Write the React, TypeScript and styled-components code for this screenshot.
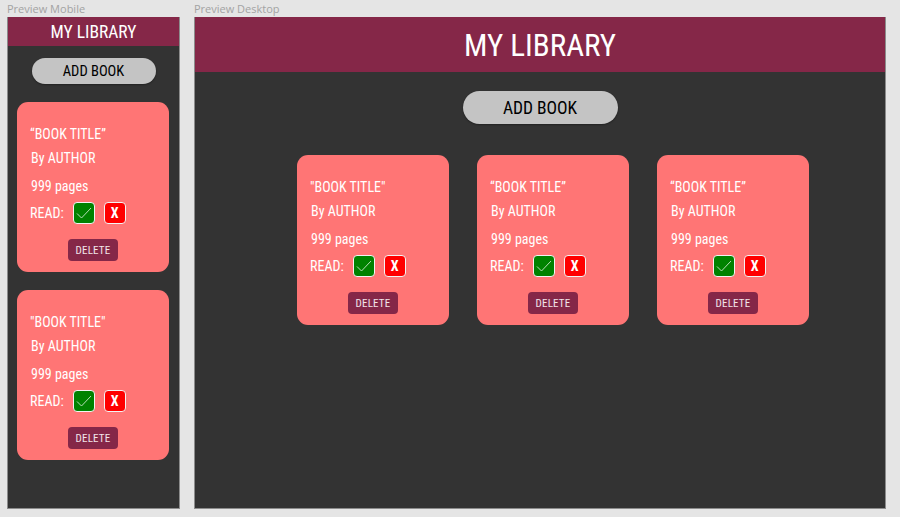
import styled, { createGlobalStyle } from "styled-components";

const GlobalStyle = createGlobalStyle`
  body {
    margin: 0;
    background: #e5e5e5;
    font-family: "Roboto Condensed", Roboto, "Liberation Sans", sans-serif;
  }
`;

const Page = styled.div`
  display: flex;
  gap: 14px;
  padding: 0 12px 0 7px;
  height: 517px;
  box-sizing: border-box;
`;

const Preview = styled.div<{ $width: number }>`
  width: ${(p) => p.$width}px;
  display: flex;
  flex-direction: column;
`;

const Label = styled.div`
  height: 17px;
  padding-top: 1px;
  box-sizing: border-box;
  font-family: "Open Sans", "Liberation Sans", sans-serif;
  font-size: 11px;
  line-height: 15px;
  color: #a3a3a3;
`;

const Frame = styled.div`
  height: 492px;
  background: #333333;
  border: 1px solid #8c8c8c;
  border-top: none;
  box-sizing: border-box;
  display: flex;
  flex-direction: column;
  align-items: center;
`;

const Header = styled.header<{ $big?: boolean }>`
  align-self: stretch;
  height: ${(p) => (p.$big ? 55 : 29)}px;
  background: #852748;
  color: #fff;
  display: flex;
  align-items: center;
  justify-content: center;
  font-size: ${(p) => (p.$big ? 31 : 17.5)}px;
  padding-top: ${(p) => (p.$big ? 2 : 1)}px;
  box-sizing: border-box;
`;

const AddButton = styled.button<{ $big?: boolean }>`
  margin-top: ${(p) => (p.$big ? 19 : 12)}px;
  width: ${(p) => (p.$big ? 155 : 124)}px;
  height: ${(p) => (p.$big ? 33 : 26)}px;
  border: none;
  border-radius: 20px;
  background: #c4c4c4;
  color: #000;
  font-family: inherit;
  font-size: ${(p) => (p.$big ? 17.5 : 14.5)}px;
  box-shadow: 0 1px 2px rgba(0, 0, 0, 0.35);
  padding: 0;
`;

const MobileList = styled.div`
  margin-top: 18px;
  align-self: flex-start;
  margin-left: 9px;
  display: flex;
  flex-direction: column;
  gap: 18px;
`;

const DesktopList = styled.div`
  margin-top: 31px;
  align-self: stretch;
  padding-left: 102px;
  display: flex;
  gap: 28px;
`;

const Card = styled.div`
  width: 152px;
  height: 170px;
  box-sizing: border-box;
  background: #ff7575;
  border-radius: 11px;
  padding: 22px 0 0 13px;
  color: #fff;
  font-size: 14px;
  display: flex;
  flex-direction: column;
`;

const Line = styled.div<{ $h: number; $indent?: number }>`
  height: ${(p) => p.$h}px;
  line-height: 20px;
  padding-left: ${(p) => p.$indent ?? 0}px;
`;

const ReadRow = styled.div`
  height: 22px;
  display: flex;
  align-items: center;
  gap: 9px;
`;

const Box = styled.div<{ $tone: "yes" | "no" }>`
  width: 22px;
  height: 22px;
  box-sizing: border-box;
  border: 1px solid #f3f3f3;
  border-radius: 4px;
  background: ${(p) => (p.$tone === "yes" ? "#008200" : "#ff0000")};
  display: flex;
  align-items: center;
  justify-content: center;
  color: #fff;
  font-size: 14px;
  font-weight: 700;
`;

const DeleteButton = styled.button`
  align-self: center;
  margin: 15px 13px 0 0;
  width: 50px;
  height: 22px;
  border: none;
  border-radius: 4px;
  background: #852748;
  color: #f2e4ea;
  font-family: inherit;
  font-size: 11px;
  letter-spacing: 0.2px;
  padding: 0;
`;

const Check = () => (
  <svg width="18" height="14" viewBox="0 0 18 14">
    <path d="M2 7.5 L6.5 12 L16 2" fill="none" stroke="#c8e6c8" strokeWidth="0.9" />
  </svg>
);

function BookCard({ title }: { title: string }) {
  return (
    <Card>
      <Line $h={24}>{title}</Line>
      <Line $h={28} $indent={1}>By AUTHOR</Line>
      <Line $h={26} $indent={1}>999 pages</Line>
      <ReadRow>
        <span>READ:</span>
        <Box $tone="yes">
          <Check />
        </Box>
        <Box $tone="no">X</Box>
      </ReadRow>
      <DeleteButton>DELETE</DeleteButton>
    </Card>
  );
}

export default function App() {
  return (
    <>
      <GlobalStyle />
      <Page>
        <Preview $width={173}>
          <Label>Preview Mobile</Label>
          <Frame>
            <Header>MY LIBRARY</Header>
            <AddButton>ADD BOOK</AddButton>
            <MobileList>
              <BookCard title="“BOOK TITLE”" />
              <BookCard title={'"BOOK TITLE"'} />
            </MobileList>
          </Frame>
        </Preview>
        <Preview $width={692}>
          <Label>Preview Desktop</Label>
          <Frame>
            <Header $big>MY LIBRARY</Header>
            <AddButton $big>ADD BOOK</AddButton>
            <DesktopList>
              <BookCard title={'"BOOK TITLE"'} />
              <BookCard title="“BOOK TITLE”" />
              <BookCard title="“BOOK TITLE”" />
            </DesktopList>
          </Frame>
        </Preview>
      </Page>
    </>
  );
}
